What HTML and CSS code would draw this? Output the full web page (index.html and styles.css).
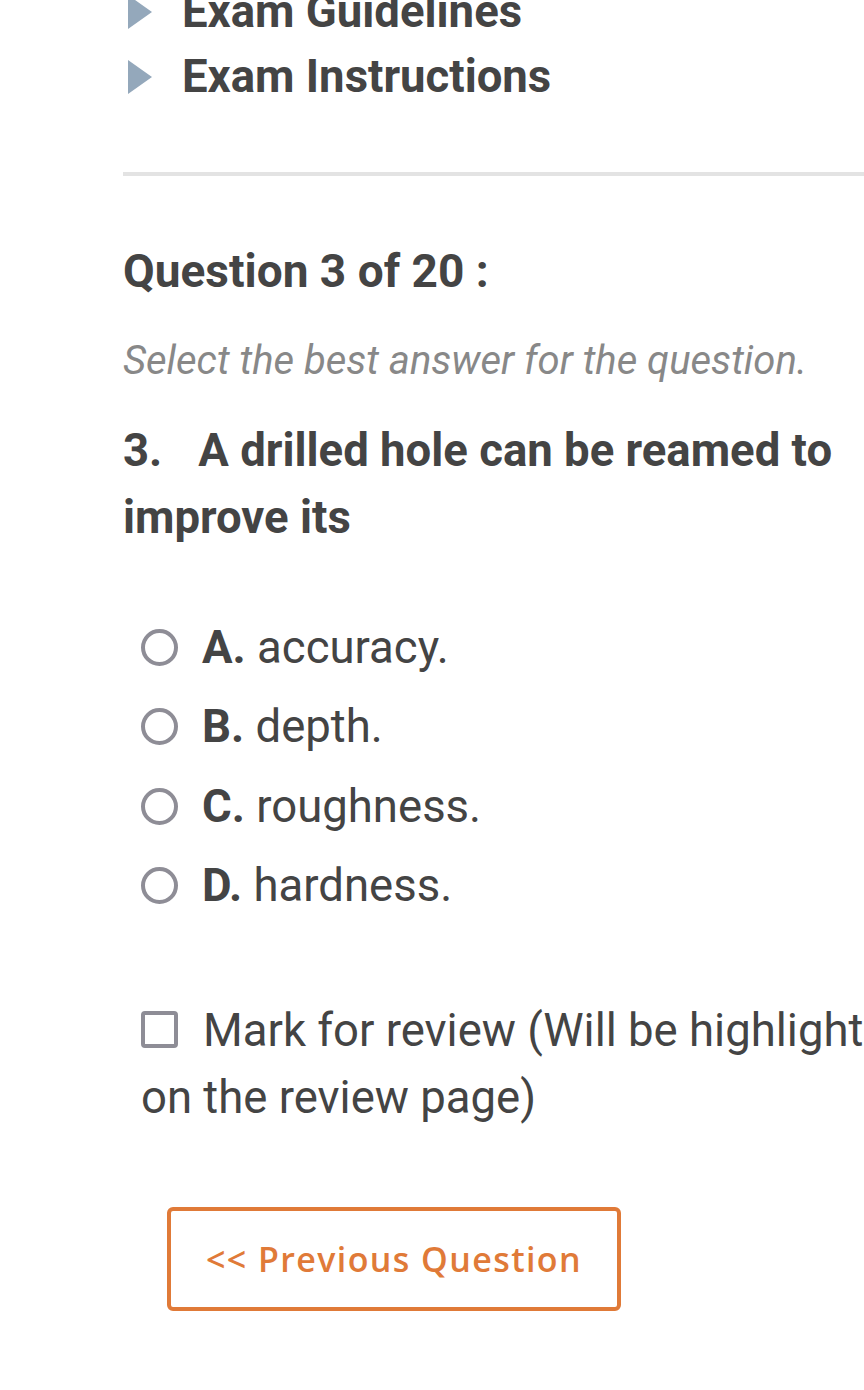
FILE: index.html
```html
<!DOCTYPE html>
<html lang="en">
<head>
<meta charset="utf-8">
<title>Exam Question 3 of 20</title>
<link rel="stylesheet" href="styles.css">
</head>
<body>
<div class="page">
  <ul class="toggles">
    <li class="toggle"><span class="tri"></span><span>Exam Guidelines</span></li>
    <li class="toggle"><span class="tri"></span><span>Exam Instructions</span></li>
  </ul>
  <div class="divider"></div>
  <h2 class="q-head">Question 3 of 20 :</h2>
  <p class="hint">Select the best answer for the question.</p>
  <p class="q-text"><span class="q-num">3.</span>A drilled hole can be reamed to improve its</p>
  <ul class="options">
    <li class="option"><span class="radio"></span><span><b>A.</b> accuracy.</span></li>
    <li class="option"><span class="radio"></span><span><b>B.</b> depth.</span></li>
    <li class="option"><span class="radio"></span><span><b>C.</b> roughness.</span></li>
    <li class="option"><span class="radio"></span><span><b>D.</b> hardness.</span></li>
  </ul>
  <p class="review"><span class="check"></span>Mark for review (Will be highlighted on the review page)</p>
  <div class="nav">
    <button class="prev">&lt;&lt; Previous Question</button>
  </div>
</div>
</body>
</html>
```
FILE: styles.css
```css
html, body {
  margin: 0;
  padding: 0;
  background: #ffffff;
  overflow: hidden;
}
body {
  font-family: Roboto, "Liberation Sans", sans-serif;
  color: #444444;
}
.page {
  margin-left: 123px;
  width: 810px;
  padding-bottom: 80px;
}
.toggles {
  list-style: none;
  margin: -21px 0 0 0;
  padding: 0;
}
.toggle {
  display: flex;
  align-items: center;
  font-size: 45.5px;
  font-weight: 700;
  line-height: 65px;
  height: 65px;
}
.tri {
  width: 0;
  height: 0;
  border-top: 17.5px solid transparent;
  border-bottom: 17.5px solid transparent;
  border-left: 24px solid #94a8bb;
  margin-left: 5px;
  margin-right: 30px;
  flex: none;
}
.divider {
  height: 4px;
  background: #e3e3e3;
  margin-top: 63px;
  width: 900px;
}
.q-head {
  margin: 65px 0 0 0;
  font-size: 46px;
  font-weight: 700;
  line-height: 60px;
}
.hint {
  margin: 36px 0 0 0;
  font-size: 40px;
  font-style: italic;
  color: #888888;
  line-height: 48px;
}
.q-text {
  margin: 32px 0 0 0;
  font-size: 45.5px;
  font-weight: 700;
  line-height: 67px;
}
.q-num {
  margin-right: 36px;
}
.options {
  list-style: none;
  margin: 57px 0 0 0;
  padding: 0 0 0 18px;
}
.option {
  display: flex;
  align-items: center;
  height: 79.3px;
  font-size: 45.5px;
  line-height: 79px;
}
.radio {
  flex: none;
  box-sizing: border-box;
  width: 37px;
  height: 37px;
  border: 4px solid #8e8d96;
  border-radius: 50%;
  margin-right: 24px;
}
.option b {
  font-weight: 700;
}
.review {
  margin: 72px 0 0 18px;
  font-size: 45.5px;
  line-height: 67px;
}
.check {
  display: inline-block;
  box-sizing: border-box;
  width: 37px;
  height: 37px;
  border: 4px solid #8e8d96;
  border-radius: 4px;
  vertical-align: -2px;
  margin-right: 25px;
}
.nav {
  display: flex;
  margin-top: 76px;
  padding-left: 44px;
}
.prev {
  box-sizing: border-box;
  width: 454px;
  height: 104px;
  border: 4px solid #e07a38;
  border-radius: 6px;
  background: #ffffff;
  color: #e07a38;
  font-family: "Open Sans", Roboto, sans-serif;
  font-size: 34px;
  font-weight: 600;
  letter-spacing: 1.4px;
  padding: 0;
}
```
